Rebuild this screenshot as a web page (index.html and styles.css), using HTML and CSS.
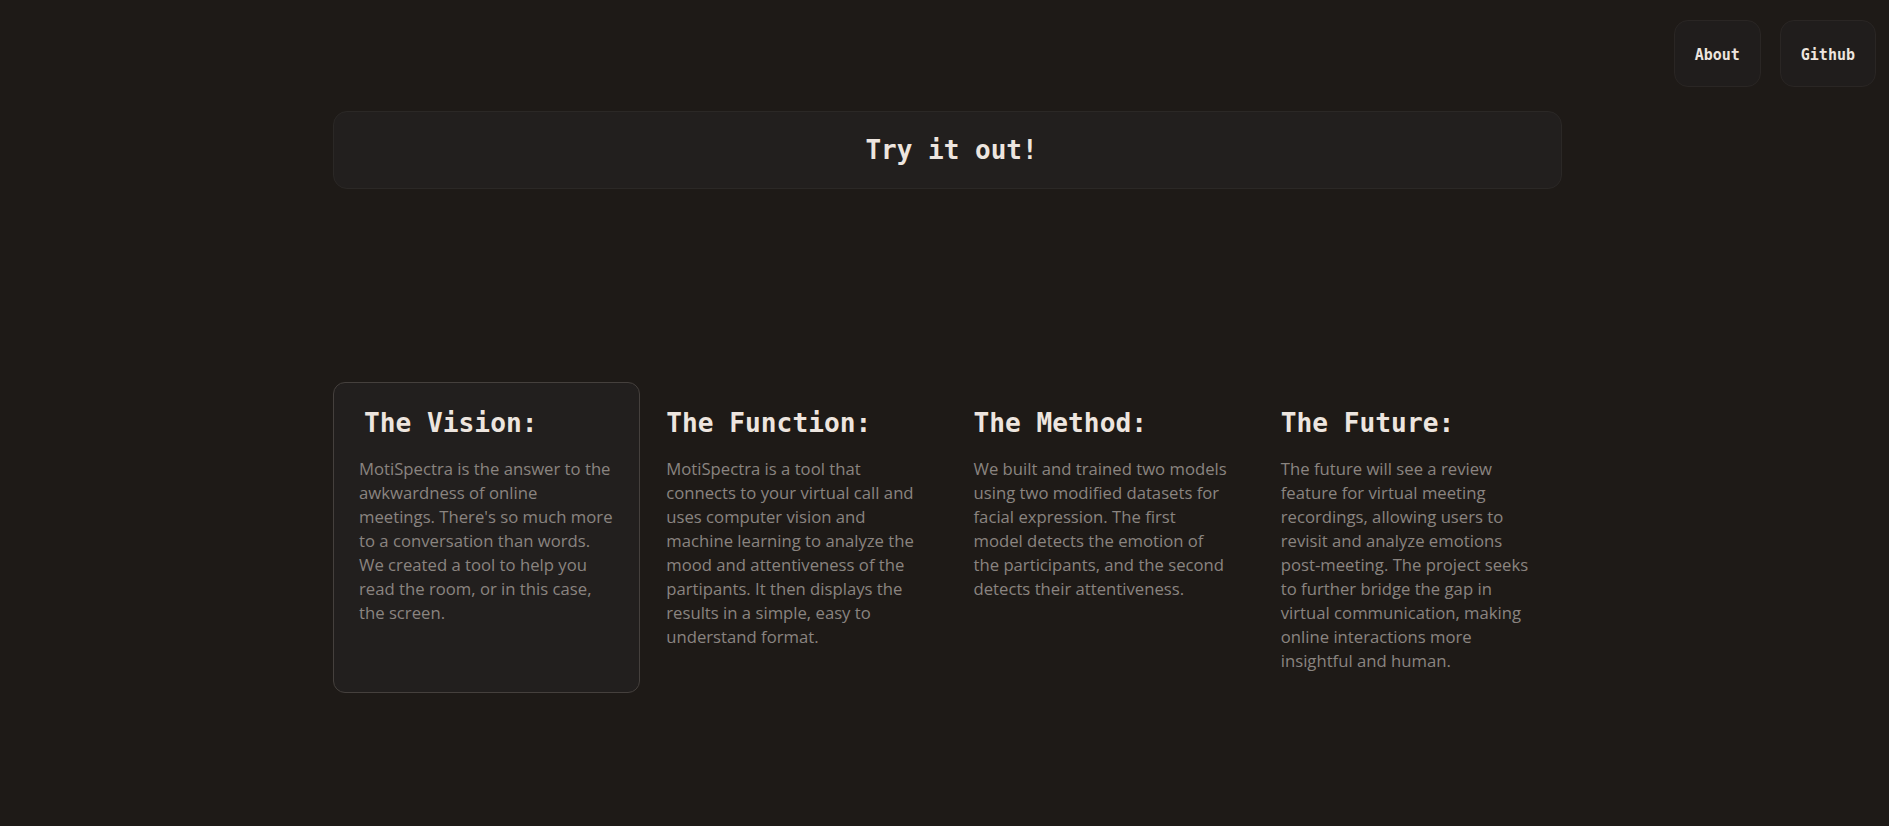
FILE: index.html
```html
<!DOCTYPE html>
<html lang="en">
<head>
<meta charset="utf-8">
<title>MotiSpectra</title>
<link rel="stylesheet" href="styles.css">
</head>
<body>
<nav class="topnav">
  <a class="navbtn" href="#">About</a>
  <a class="navbtn" href="#">Github</a>
</nav>
<main class="page">
  <a class="try" href="#">Try it out!</a>
  <section class="grid">
    <div class="card active">
      <h2>The Vision:</h2>
      <p>MotiSpectra is the answer to the awkwardness of online meetings. There's so much more to a conversation than words. We created a tool to help you read the room, or in this case, the screen.</p>
    </div>
    <div class="card">
      <h2>The Function:</h2>
      <p>MotiSpectra is a tool that connects to your virtual call and uses computer vision and machine learning to analyze the mood and attentiveness of the partipants. It then displays the results in a simple, easy to understand format.</p>
    </div>
    <div class="card">
      <h2>The Method:</h2>
      <p>We built and trained two models using two modified datasets for facial expression. The first model detects the emotion of the participants, and the second detects their attentiveness.</p>
    </div>
    <div class="card">
      <h2>The Future:</h2>
      <p>The future will see a review feature for virtual meeting recordings, allowing users to revisit and analyze emotions post-meeting. The project seeks to further bridge the gap in virtual communication, making online interactions more insightful and human.</p>
    </div>
  </section>
</main>
</body>
</html>
```

FILE: styles.css
```css
* { box-sizing: border-box; }

html, body {
  margin: 0;
  padding: 0;
  background: #1e1a17;
  color: #ede5df;
  height: 100%;
}

body {
  font-family: "Open Sans", "Noto Sans", sans-serif;
}

a { color: inherit; text-decoration: none; }

.topnav {
  display: flex;
  justify-content: flex-end;
  gap: 19px;
  padding: 20px 13px 0 0;
}

.navbtn {
  display: flex;
  align-items: center;
  height: 67px;
  padding: 2px 20px 0 20px;
  border: 1px solid #2a2624;
  border-radius: 14px;
  background: #201d1c;
  font-family: "DejaVu Sans Mono", monospace;
  font-weight: bold;
  font-size: 15px;
  color: #ede5df;
}

.page {
  display: flex;
  flex-direction: column;
  align-items: center;
  padding-left: 6px;
}

.try {
  display: flex;
  align-items: center;
  justify-content: center;
  width: 1229px;
  height: 78px;
  margin-top: 24px;
  border: 1px solid #2b2826;
  border-radius: 14px;
  background: #221f1e;
  font-family: "DejaVu Sans Mono", monospace;
  font-weight: bold;
  font-size: 26px;
  color: #ede5df;
  padding-left: 8px;
}

.grid {
  display: grid;
  grid-template-columns: repeat(4, 1fr);
  width: 1229px;
  margin-top: 193px;
}

.card {
  padding: 25px 25px 19px 25px;
  border: 1px solid transparent;
  border-radius: 12px;
}

.card.active {
  border-color: #45403d;
  background: #221f1e;
}

.card h2 {
  margin: 0 0 19px 0;
  font-family: "DejaVu Sans Mono", monospace;
  font-weight: bold;
  font-size: 26.2px;
  color: #ede5df;
}

.card.active h2 {
  transform: translateX(5px);
}

.card p {
  margin: 0;
  font-size: 16.7px;
  line-height: 24px;
  color: #8a8480;
}
```
